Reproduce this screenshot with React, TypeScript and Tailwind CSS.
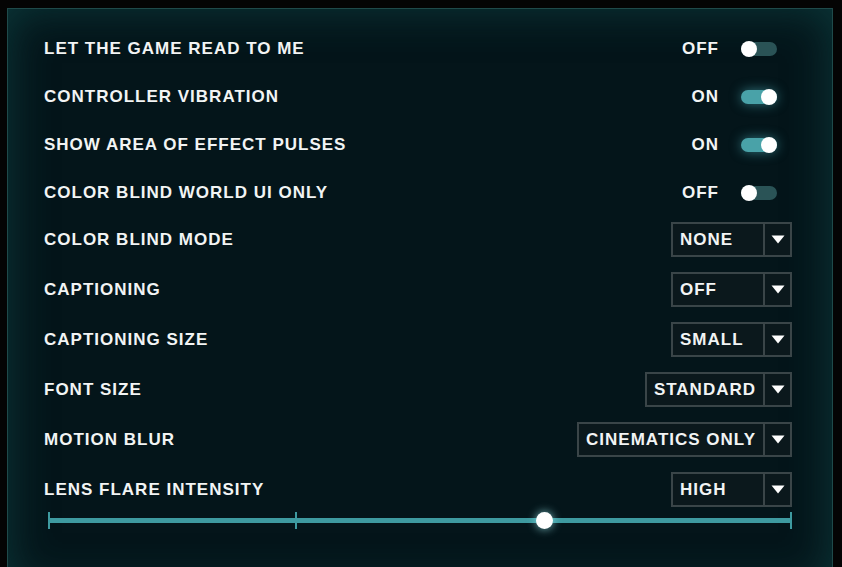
import React from "react";

const toggles = [
  { label: "LET THE GAME READ TO ME", on: false },
  { label: "CONTROLLER VIBRATION", on: true },
  { label: "SHOW AREA OF EFFECT PULSES", on: true },
  { label: "COLOR BLIND WORLD UI ONLY", on: false },
];

const selects = [
  { label: "COLOR BLIND MODE", value: "NONE" },
  { label: "CAPTIONING", value: "OFF" },
  { label: "CAPTIONING SIZE", value: "SMALL" },
  { label: "FONT SIZE", value: "STANDARD" },
  { label: "MOTION BLUR", value: "CINEMATICS ONLY" },
  { label: "LENS FLARE INTENSITY", value: "HIGH" },
];

const Toggle = ({ on }: { on: boolean }) => (
  <div
    className={
      on
        ? "relative w-[36px] h-[14px] rounded-full bg-[#49a2a8] shadow-[0_0_12px_rgba(80,190,200,0.55)]"
        : "relative w-[36px] h-[14px] rounded-full bg-[#2a5356]"
    }>
    <div
      className={
        on
          ? "absolute right-0 top-[-1px] w-[16px] h-[16px] rounded-full bg-white"
          : "absolute left-0 top-[-1px] w-[16px] h-[16px] rounded-full bg-white"
      }
    />
  </div>
);

const Select = ({ value }: { value: string }) => (
  <div className="flex h-[35px]">
    <div className="min-w-[94px] h-full border-2 border-[#3a4548] bg-[#0b181c] pl-[7px] pr-[7px] flex items-center">
      <span className="tracking-[1px]">{value}</span>
    </div>
    <div className="w-[27px] h-full border-2 border-l-0 border-[#3a4548] bg-[#0b181c] flex items-center justify-center">
      <svg width="14" height="9" viewBox="0 0 14 9">
        <path d="M0.5 0.5 L13.5 0.5 L7 8.5 Z" fill="#fff" />
      </svg>
    </div>
  </div>
);

export default function App() {
  return (
    <div
      className="w-[842px] h-[567px] overflow-hidden bg-[#040404] pl-[7px] pt-[8px] pr-[9px] text-[#f2f4f4] font-bold text-[17px]"
      style={{ fontFamily: '"Liberation Sans", Arial, sans-serif' }}>
      <div className="relative w-[826px] h-[580px] border border-[#1f4a4a] bg-[#04151a] shadow-[inset_0_0_45px_rgba(16,80,80,0.6)] pl-[36px] pr-[40px] pt-[16px]">
        <div className="flex flex-col">
          {toggles.map((t) => (
            <div key={t.label} className="h-[48px] flex items-center">
              <span className="flex-1 tracking-[1px]">{t.label}</span>
              <div className="flex items-center gap-[22px] pr-[15px]">
                <span className="tracking-[1px]">{t.on ? "ON" : "OFF"}</span>
                <Toggle on={t.on} />
              </div>
            </div>
          ))}
        </div>
        <div className="mt-[5px] flex flex-col gap-[15px]">
          {selects.map((s) => (
            <div key={s.label} className="h-[35px] flex items-center">
              <span className="flex-1 tracking-[1px]">{s.label}</span>
              <Select value={s.value} />
            </div>
          ))}
        </div>
        <div className="mt-[5px] pl-[4px] h-[16px] relative flex items-center">
          <div className="relative w-full h-[5px] bg-[#3e9aa0]">
            <div className="absolute left-0 top-[-6px] w-[2px] h-[17px] bg-[#3e9aa0]" />
            <div className="absolute left-[247px] top-[-6px] w-[2px] h-[17px] bg-[#3e9aa0]" />
            <div className="absolute right-0 top-[-6px] w-[2px] h-[17px] bg-[#3e9aa0]" />
            <div className="absolute left-[488px] top-[-6px] w-[17px] h-[17px] rounded-full bg-white shadow-[0_0_10px_rgba(150,230,235,0.8)]" />
          </div>
        </div>
      </div>
    </div>
  );
}
